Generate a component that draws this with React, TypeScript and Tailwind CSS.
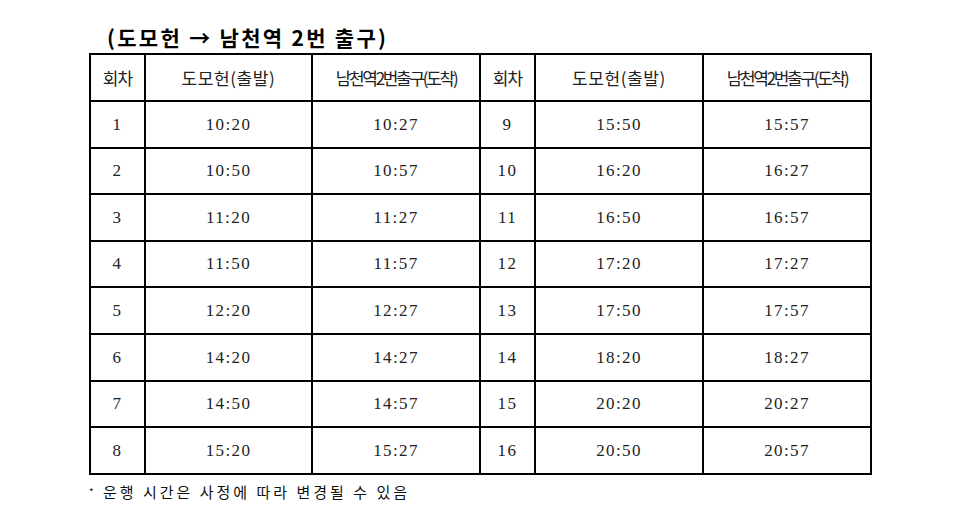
import React from 'react';

const rows: [string, string, string, string, string, string][] = [
  ['1', '10:20', '10:27', '9', '15:50', '15:57'],
  ['2', '10:50', '10:57', '10', '16:20', '16:27'],
  ['3', '11:20', '11:27', '11', '16:50', '16:57'],
  ['4', '11:50', '11:57', '12', '17:20', '17:27'],
  ['5', '12:20', '12:27', '13', '17:50', '17:57'],
  ['6', '14:20', '14:27', '14', '18:20', '18:27'],
  ['7', '14:50', '14:57', '15', '20:20', '20:27'],
  ['8', '15:20', '15:27', '16', '20:50', '20:57'],
];

const kr = "font-['Noto_Sans_CJK_KR',sans-serif]";
const num = "font-['Liberation_Serif','Noto_Sans_CJK_KR',serif] text-[17px] tracking-[1.4px]";
const cell = 'border-2 border-black text-center align-middle p-0 text-[#222]';

function HeaderCells() {
  return (
    <>
      <th className={`${cell} ${kr} text-[17px] font-normal tracking-[-1px]`}>회차</th>
      <th className={`${cell} ${kr} text-[17px] font-normal tracking-[0.6px]`}>도모헌(출발)</th>
      <th className={`${cell} ${kr} text-[17px] font-normal tracking-[-2.3px]`}>남천역2번출구(도착)</th>
    </>
  );
}

export default function App() {
  return (
    <div className="w-[963px] h-[532px] bg-white pl-[89px] pt-[23px]">
      <h1 className={`${kr} pl-[18px] text-[21px] leading-[28px] font-bold tracking-[2.3px] text-black`}>
        (도모헌 → 남천역 2번 출구)
      </h1>

      <table className="mt-[2px] w-[781px] table-fixed border-collapse">
        <colgroup>
          <col className="w-[55px]" />
          <col className="w-[167px]" />
          <col className="w-[168px]" />
          <col className="w-[55px]" />
          <col className="w-[168px]" />
          <col className="w-[168px]" />
        </colgroup>
        <thead>
          <tr className="h-[47px]">
            <HeaderCells />
            <HeaderCells />
          </tr>
        </thead>
        <tbody>
          {rows.map((r) => (
            <tr key={r[0]} className="h-[46.6px]">
              {r.map((v, i) => (
                <td key={i} className={`${cell} ${num}`}>
                  {v}
                </td>
              ))}
            </tr>
          ))}
        </tbody>
      </table>

      <p className={`${kr} mt-[7px] text-[15px] leading-[20px] tracking-[3px] text-[#111]`}>
        <span className="text-[10px] align-top">*</span> 운행 시간은 사정에 따라 변경될 수 있음
      </p>
    </div>
  );
}
